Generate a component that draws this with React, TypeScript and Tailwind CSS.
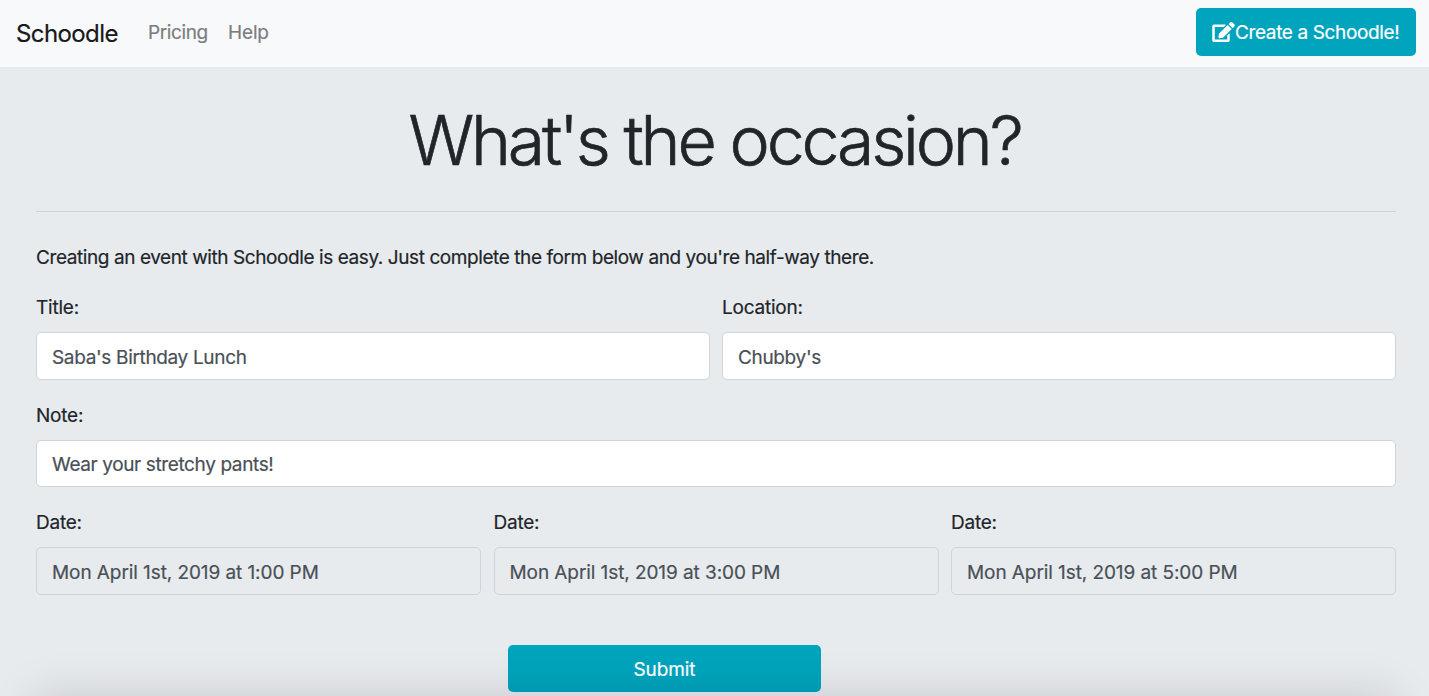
import { FaEdit } from "react-icons/fa";
import type { ReactNode } from "react";

function Field({ label, value, disabled = false, short = false }: { label: ReactNode; value: string; disabled?: boolean; short?: boolean }) {
  return (
    <label className="flex min-w-0 flex-1 flex-col leading-[30px]">
      <span className="mb-[9px] pt-px tracking-[-0.22px]">{label}</span>
      <input
        defaultValue={value}
        disabled={disabled}
        className={`w-full rounded-[5px] border border-[#ced4da] bg-white px-[15px] text-[#495057] outline-none disabled:bg-[#e8ebee] disabled:tracking-[-0.08px] ${short ? "h-[47px] pt-px tracking-[-0.38px]" : "h-[48px] pt-[2px] tracking-[-0.34px]"}`}
      />
    </label>
  );
}

export default function App() {
  return (
    <div className="relative flex h-[696px] flex-col overflow-hidden bg-[#e8ebee] font-['Inter',sans-serif] text-[19px] text-[#212529] [-webkit-text-stroke-width:0.2px]">
      <nav className="flex h-[67px] shrink-0 items-start bg-[#f8f9fb] pt-2 pr-[13px] pl-4">
        <span className="mt-[7px] w-[102px] text-[24px] leading-[38px] tracking-[-0.6px] whitespace-nowrap text-[#181919]">Schoodle</span>
        <span className="mt-[10px] ml-[30px] w-[60px] leading-[30px] tracking-[-0.4px] whitespace-nowrap text-[#7c7d7d]">Pricing</span>
        <span className="mt-[10px] ml-5 leading-[30px] tracking-[-0.15px] text-[#7c7d7d]">Help</span>
        <button className="ml-auto flex h-[48px] w-[220px] items-center rounded-[5px] bg-[#00a4bd] pl-4 tracking-[-0.37px] whitespace-nowrap text-white">
          <FaEdit className="h-[20px] w-[23px] shrink-0" />
          <span className="pt-[2px]">Create a Schoodle!</span>
        </button>
      </nav>
      <main className="flex flex-col pr-[33px] pl-[36px]">
        <h1 className="mt-[30px] pr-[3px] text-center text-[68px] leading-[86px] font-light tracking-[-3.2px] [-webkit-text-stroke-width:0.65px]">What's the occasion?</h1>
        <hr className="mt-[28px] border-[#ced2d5]" />
        <p className="mt-[31px] leading-[30px] tracking-[-0.42px]">Creating an event with Schoodle is easy. Just complete the form below and you're half-way there.</p>
        <div className="mt-[19px] flex gap-3">
          <Field label="Title:" value="Saba's Birthday Lunch" />
          <Field label="Location:" value="Chubby's" />
        </div>
        <div className="mt-5 flex">
          <Field short label="Note:" value="Wear your stretchy pants!" />
        </div>
        <div className="mt-5 flex gap-[12.5px]">
          <Field disabled label="Date:" value="Mon April 1st, 2019 at 1:00 PM" />
          <Field disabled label="Date:" value="Mon April 1st, 2019 at 3:00 PM" />
          <Field disabled label="Date:" value="Mon April 1st, 2019 at 5:00 PM" />
        </div>
        <button className="mt-[50px] ml-[472px] h-[47px] w-[313px] rounded-[5px] bg-[#00a4bd] pt-[3px] tracking-[-0.1px] text-white">Submit</button>
      </main>
      <div className="pointer-events-none absolute -bottom-20 right-[34px] left-[34px] h-20 shadow-[0_0_46px_rgba(0,0,0,0.15)]" />
    </div>
  );
}
